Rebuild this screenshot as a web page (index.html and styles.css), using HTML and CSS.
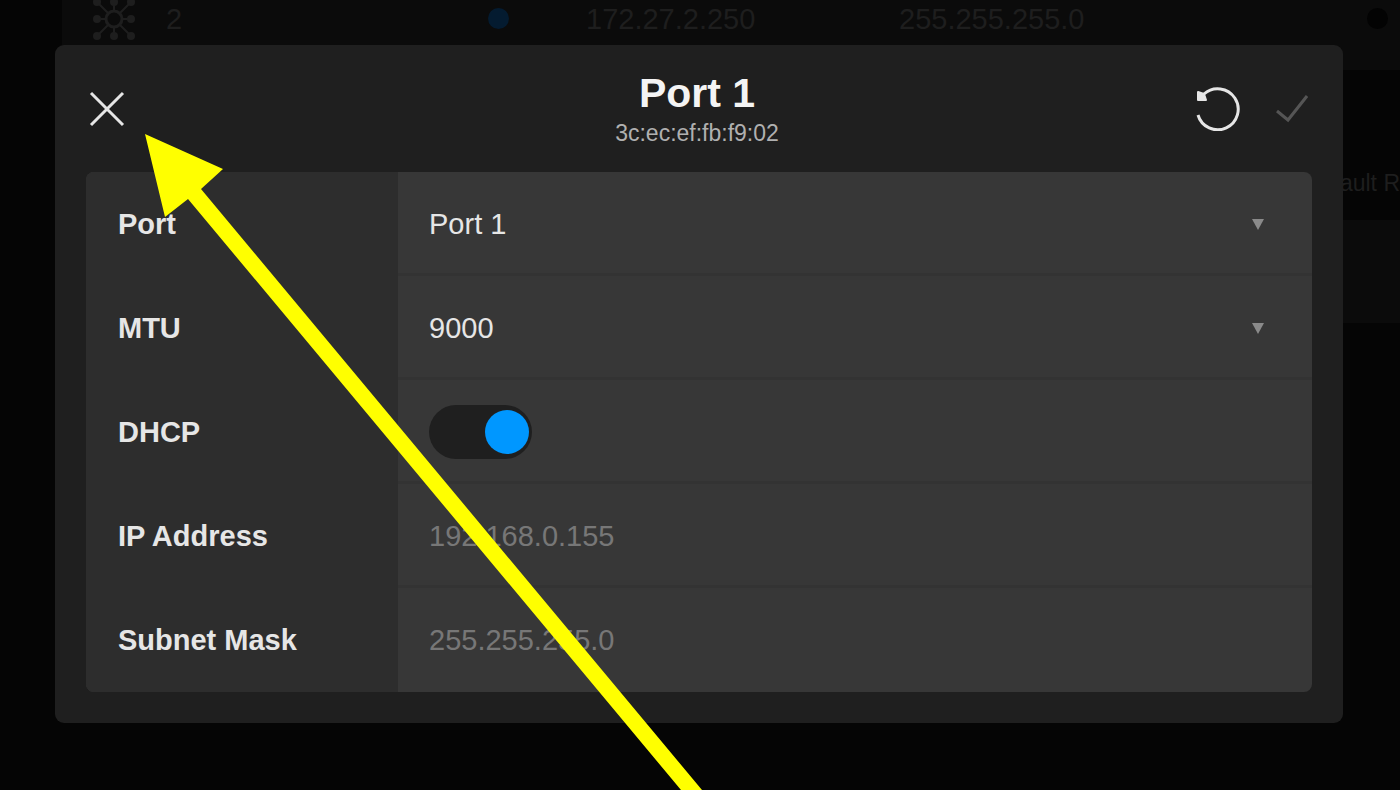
FILE: index.html
```
<!DOCTYPE html>
<html lang="en">
	<head>
		<meta charset="utf-8" />
		<meta name="viewport" content="width=device-width, initial-scale=1.0" />
		<title>Port 1</title>
		<link rel="stylesheet" href="styles.css">
	</head>
	<body>
		<main class="screen">
			<!-- dimmed port list behind the dialog -->
			<div class="backdrop" aria-hidden="true">
				<div class="port-row -first">
					<svg class="hub" viewBox="0 0 44 44" width="44" height="44">
						<g fill="none" stroke="currentColor" stroke-width="2">
							<circle cx="22" cy="22" r="8" stroke-width="3" />
							<path d="M22 14V5M22 30v9M14 22H5M30 22h9M16 16L5 5M28 16L39 5M16 28L5 39M28 28l11 11" />
						</g>
						<g fill="currentColor">
							<circle cx="22" cy="5" r="4" /><circle cx="22" cy="39" r="4" />
							<circle cx="5" cy="22" r="4" /><circle cx="39" cy="22" r="4" />
							<circle cx="5" cy="5" r="4" /><circle cx="39" cy="5" r="4" />
							<circle cx="5" cy="39" r="4" /><circle cx="39" cy="39" r="4" />
						</g>
					</svg>
					<span>2</span>
					<span class="dot -on"></span>
					<span>172.27.2.250</span>
					<span>255.255.255.0</span>
					<span class="dot"></span>
				</div>
				<div class="port-heading">Default R</div>
				<div class="port-row"></div>
			</div>

			<form class="dialog" role="dialog" aria-labelledby="dialog-title">
				<header class="dialog-header">
					<button type="button" class="icon-button" aria-label="Close">
						<svg viewBox="0 0 42 40" width="42" height="40" fill="none" stroke="currentColor" stroke-width="3"><path d="M5 4l32 32M37 4L5 36" /></svg>
					</button>
					<div class="dialog-heading">
						<h1 id="dialog-title">Port 1</h1>
						<p>3c:ec:ef:fb:f9:02</p>
					</div>
					<div class="dialog-actions">
						<button type="button" class="icon-button" aria-label="Reset">
							<svg viewBox="0 0 44 44" width="44" height="44">
								<path d="M2 28A20.5 20.5 0 1 0 8 7" fill="none" stroke="currentColor" stroke-width="3" />
								<path d="M2 5v8h8L8 7z" fill="currentColor" stroke="currentColor" stroke-width="2" stroke-linejoin="round" />
							</svg>
						</button>
						<button type="submit" class="icon-button" aria-label="Apply" disabled>
							<svg viewBox="0 0 32 28" width="32" height="28" fill="none" stroke="currentColor" stroke-width="3"><path d="M1 16l11 9L31 1" /></svg>
						</button>
					</div>
				</header>

				<div class="fields">
					<div class="field">
						<label for="port">Port</label>
						<div class="value">
							<select id="port"><option>Port 1</option></select>
							<svg class="caret" viewBox="0 0 12 11" width="12" height="11"><path d="M0 0h12L6 11z" /></svg>
						</div>
					</div>
					<div class="field">
						<label for="mtu">MTU</label>
						<div class="value">
							<select id="mtu"><option>9000</option></select>
							<svg class="caret" viewBox="0 0 12 11" width="12" height="11"><path d="M0 0h12L6 11z" /></svg>
						</div>
					</div>
					<div class="field">
						<label for="dhcp">DHCP</label>
						<div class="value"><input type="checkbox" class="toggle" id="dhcp" checked /></div>
					</div>
					<div class="field">
						<label for="ip-address">IP Address</label>
						<div class="value"><input type="text" id="ip-address" value="192.168.0.155" disabled /></div>
					</div>
					<div class="field">
						<label for="subnet-mask">Subnet Mask</label>
						<div class="value"><input type="text" id="subnet-mask" value="255.255.255.0" disabled /></div>
					</div>
				</div>
			</form>

			<!-- arrow pointing at the close button -->
			<svg class="pointer" viewBox="0 0 1400 790" preserveAspectRatio="xMinYMin meet" aria-hidden="true">
				<path d="M145 134L223 169L201 189L702 790H681L188 199L165 217z" />
			</svg>
		</main>
	</body>
</html>
```

FILE: styles.css
```
body {
	margin: 0;
	background-color: #fff;
	font: 29px/36px "Liberation Sans", Arial, sans-serif;
}

.screen {
	position: relative;
	padding: 45px 57px 67px 55px;
	background-color: #050505;
	overflow: hidden;
}

/* port list */
.backdrop {
	position: absolute;
	inset: 0 0 0 62px;
	color: #1e1e1e;
}

.port-row {
	display: grid;
	grid-template-columns: 74px 322fr 98fr 313fr 468fr 33fr;
	align-items: center;
	box-sizing: border-box;
	height: 103px;
	padding-left: 30px;
	background-color: #0b0b0b;
}
.port-row.-first {
	margin-top: -33px;
}

.port-heading {
	padding: 95px 0 19px;
	text-align: right;
	font-size: 23px;
	white-space: nowrap;
}

.dot {
	width: 21px;
	height: 21px;
	border-radius: 50%;
	background-color: #030303;
}
.dot.-on {
	background-color: #041b30;
}

/* dialog */
.dialog {
	position: relative;
	padding: 0 31px 31px;
	border-radius: 9px;
	background-color: #1f1f1f;
	color: #e6e6e6;
}

.dialog-header {
	display: grid;
	grid-template-columns: 1fr auto 1fr;
	align-items: center;
	height: 127px;
	padding-right: 4px;
}

.dialog-heading {
	padding-top: 4px;
	text-align: center;
}

.dialog-heading h1 {
	margin: 0;
	color: #f4f4f4;
	font-size: 41px;
	line-height: 44px;
}

.dialog-heading p {
	margin: 0;
	color: #b0b0b0;
	font-size: 23px;
}

.dialog-actions {
	display: flex;
	align-items: center;
	justify-content: flex-end;
	gap: 36px;
}

.icon-button {
	justify-self: start;
	padding: 0;
	border: none;
	background: none;
	color: #e6e6e6;
}
.icon-button:disabled {
	color: #555;
}

.icon-button svg {
	display: block;
}

.fields {
	border-radius: 8px;
	background-color: #373737;
	overflow: hidden;
}

.field {
	display: grid;
	grid-template-columns: 312px 1fr;
	height: 104px;
}

.field label {
	padding-left: 32px;
	background-color: #2d2d2d;
	font-weight: bold;
	line-height: 104px;
}

.value {
	display: grid;
	align-items: center;
	padding: 0 48px 0 31px;
}

.field:not(:last-child) .value {
	box-shadow: inset 0 -3px #333;
}

.value select,
.value input[type="text"] {
	grid-area: 1 / 1;
	width: 100%;
	padding: 0;
	border: none;
	background: none;
	color: #e6e6e6;
	font: inherit;
	appearance: none;
}

.value input[type="text"]:disabled {
	color: #777;
}

.caret {
	grid-area: 1 / 1;
	justify-self: end;
	fill: #8a8a8a;
	pointer-events: none;
}

.toggle {
	display: flex;
	align-items: center;
	justify-content: flex-start;
	box-sizing: border-box;
	width: 103px;
	height: 54px;
	margin: 0;
	padding: 0 3px;
	border-radius: 27px;
	background-color: #1f1f1f;
	appearance: none;
}

.toggle::before {
	width: 44px;
	height: 44px;
	border-radius: 50%;
	background-color: #777;
	content: "";
}

.toggle:checked {
	justify-content: flex-end;
}

.toggle:checked::before {
	background-color: #0097ff;
}

.pointer {
	position: absolute;
	top: 0;
	left: 0;
	width: 1400px;
	height: 790px;
	fill: #ff0;
	pointer-events: none;
}
```
